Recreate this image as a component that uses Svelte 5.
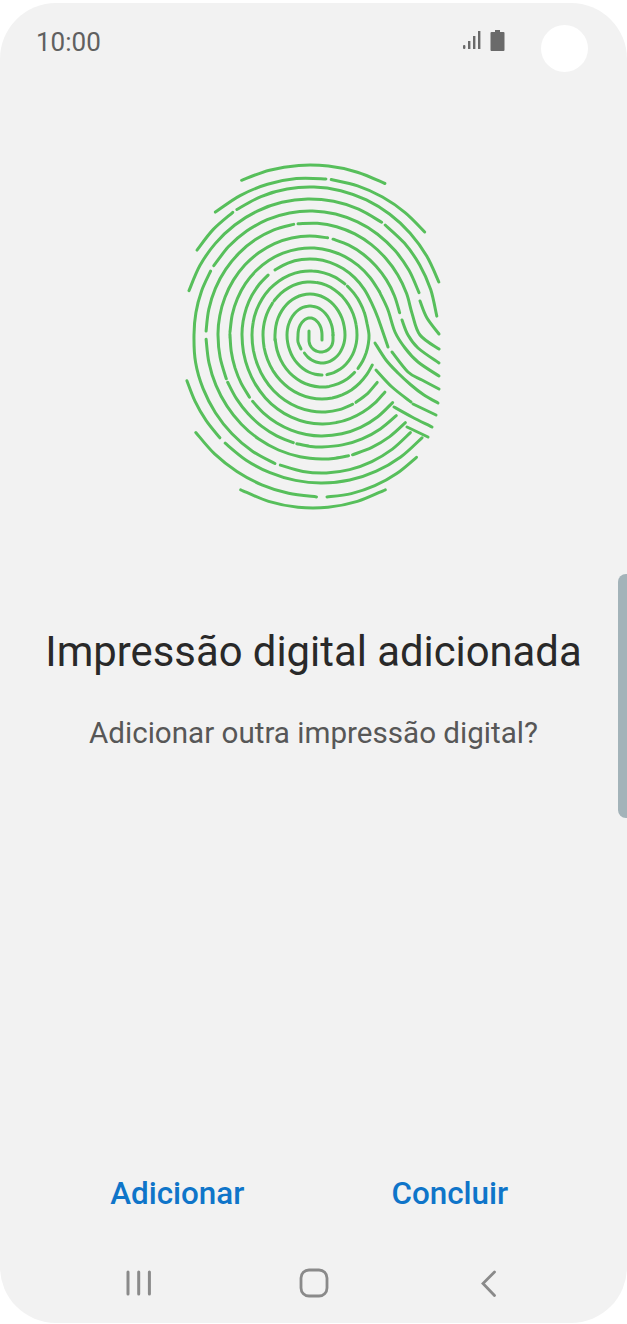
<script>
	// elliptical piece of a ridge, t in degrees (0 right, 90 top, 180 left, 270 bottom)
	function arc(cx, cy, a, b, t0, t1) {
		const n = Math.max(2, Math.ceil(Math.abs(t1 - t0) / 12));
		const pts = [];
		for (let i = 0; i <= n; i++) {
			const t = ((t0 + ((t1 - t0) * i) / n) * Math.PI) / 180;
			pts.push([cx + a * Math.cos(t), cy - b * Math.sin(t)]);
		}
		return pts;
	}
	const top = (a, b, t0, t1) => arc(310, 335, a, b, t0, t1);
	const low = (a, b, t0, t1) => arc(322, 335, a, b, t0, t1);

	function join(...parts) {
		const out = [];
		for (const p of parts.flat()) {
			const last = out[out.length - 1];
			if (!last || Math.hypot(last[0] - p[0], last[1] - p[1]) > 1) out.push(p);
		}
		return out;
	}

	const ridges = [
		top(165, 170, 114.5, 63),
		top(152, 157, 128.5, 84),
		top(152, 157, 82, 41),
		top(138, 148, 145, 124),
		top(138, 148, 122, 21),
		top(128, 136, 161, 56),
		top(128, 136, 54, 8),
		top(116, 124, 146, 20),
		[[420, 301], [427, 318], [439, 334]],
		join(top(116, 124, 149, 180), low(129, 138, 180, 248.6)),
		join(low(125, 138, 250.5, 315)),
		top(104, 112, 178, 99),
		join(top(104, 112, 96.6, 11), [[420, 335], [439, 349]]),
		join(low(116, 124, 182, 270), low(118, 124, 270, 283)),
		low(118, 124, 285, 315),
		join(low(104, 112, 203, 180), top(92, 99, 180, 79)),
		top(92, 99, 75.5, 13),
		[[402, 320], [408, 335], [418, 348], [439, 363]],
		low(104, 112, 205, 254),
		join(low(104, 112, 256, 270), low(107, 112, 270, 314)),
		top(80, 87, 178, 30),
		join(top(80, 87, 30, 28), [[388, 310], [395, 332], [405, 348], [418, 362], [439, 376]]),
		join(top(80, 87, 182, 180), low(92, 101, 180, 218)),
		join(low(92, 101, 221, 270), low(95, 101, 270, 318)),
		join(top(68, 76, 128, 180), low(80, 89, 180, 270), low(82, 89, 270, 320)),
		join(top(68, 76, 121, 25), [[378, 318], [388, 347]]),
		[[392, 352], [408, 372], [422, 380], [439, 389]],
		join(top(58, 64, 53, 180), low(70, 77, 180, 296)),
		low(70, 77, 299, 322),
		join(low(35, 40, 278, 360), top(47, 53, 0, 140)),
		join(top(47, 53, 143, 180), low(59, 64, 180, 270), low(57, 64, 270, 332)),
		join(low(23, 28, 220, 360), top(35, 41, 0, 180), [[275, 340]]),
		low(47, 52, 185, 314),
		join(low(47, 52, 320, 360), top(58, 64, 0, 50)),
		join([[333, 332]], top(23, 29, 0, 180), low(35, 40, 180, 270)),
		join([[309, 331]], arc(321, 340, 12, 12, 180, 360), [[333, 335]]),
		join([[322, 340]], top(12, 17, 0, 180), [[298, 342], [301, 349]]),
		low(142, 148, 198, 224),
		join(low(142, 148, 227, 270), low(139, 148, 270, 316)),
		low(158, 162, 217, 268),
		low(144, 162, 272, 311),
		arc(313, 335, 162, 173, 243.5, 296.5),
		[[375, 343], [386, 360], [398, 373], [411, 385], [424, 395], [438, 403]],
		[[376, 370], [392, 387], [411, 402]],
		[[413, 404], [436, 415]],
		[[394, 407], [412, 417], [432, 427]],
		[[407, 427], [428, 437]]
	];

	// catmull-rom through the points, written as cubic beziers
	function smooth(pts) {
		const f = (n) => n.toFixed(1);
		let d = `M${f(pts[0][0])} ${f(pts[0][1])}`;
		for (let i = 0; i < pts.length - 1; i++) {
			const p0 = pts[i - 1] ?? pts[i];
			const p1 = pts[i];
			const p2 = pts[i + 1];
			const p3 = pts[i + 2] ?? p2;
			d += `C${f(p1[0] + (p2[0] - p0[0]) / 6)} ${f(p1[1] + (p2[1] - p0[1]) / 6)} ${f(p2[0] - (p3[0] - p1[0]) / 6)} ${f(p2[1] - (p3[1] - p1[1]) / 6)} ${f(p2[0])} ${f(p2[1])}`;
		}
		return d;
	}
</script>

<div class="screen">
	<header class="status">
		<span class="time">10:00</span>
		<div class="status-icons">
			<svg width="20" height="21" viewBox="0 0 20 21" fill="#6a6a6a">
				<rect x="0" y="15" width="2.4" height="4" rx="1" />
				<rect x="5" y="11" width="2.4" height="8" />
				<rect x="10" y="6" width="2.4" height="13" />
				<rect x="15" y="1" width="2.4" height="18" />
			</svg>
			<svg width="16" height="22" viewBox="0 0 16 22" fill="#6a6a6a">
				<path d="M5 0h5v2h3.5a1 1 0 0 1 1 1v17a1 1 0 0 1-1 1h-12a1 1 0 0 1-1-1V3a1 1 0 0 1 1-1H5z" />
			</svg>
		</div>
		<span class="camera"></span>
	</header>

	<svg class="print" width="270" height="365" viewBox="180 155 270 365" fill="none" stroke="#57bf5b" stroke-width="3" stroke-linecap="round">
		{#each ridges as pts}
			<path d={smooth(pts)} />
		{/each}
	</svg>

	<h1>Impressão digital adicionada</h1>
	<p>Adicionar outra impressão digital?</p>

	<div class="actions">
		<span>Adicionar</span>
		<span>Concluir</span>
	</div>

	<nav>
		<svg width="26" height="26" viewBox="0 0 26 26" fill="none" stroke="#8a8a8a" stroke-width="3" stroke-linecap="round">
			<path d="M2 2v22M12.7 2v22M23.4 2v22" />
		</svg>
		<svg width="30" height="30" viewBox="0 0 30 30" fill="none" stroke="#8a8a8a" stroke-width="2.8">
			<rect x="2" y="2" width="26" height="26" rx="8" />
		</svg>
		<svg width="18" height="27" viewBox="0 0 18 27" fill="none" stroke="#8a8a8a" stroke-width="2.8" stroke-linecap="round" stroke-linejoin="miter">
			<path d="M14.5 2 3 13.5 14.5 25.5" />
		</svg>
	</nav>

	<div class="side-key"></div>
</div>

<style>
	:global(body) {
		background: #fff;
	}

	.screen {
		position: relative;
		display: flex;
		flex-direction: column;
		height: 1320px;
		margin-top: 3px;
		background: #f2f2f2;
		border-radius: 56px;
		overflow: hidden;
		font-family: Roboto, sans-serif;
	}

	.status {
		display: flex;
		align-items: center;
		height: 72px;
		padding: 0 39px 0 37px;
	}

	.time {
		font-size: 26px;
		color: #606060;
		margin-top: 5px;
		margin-left: -1px;
	}

	.status-icons {
		display: flex;
		align-items: flex-start;
		gap: 7px;
		margin-left: auto;
		margin-top: 3px;
	}

	.camera {
		width: 47px;
		height: 47px;
		margin-left: 35px;
		margin-top: 18px;
		border-radius: 50%;
		background: #fff;
	}

	.print {
		display: block;
		margin: 80px 0 0 180px;
		flex: none;
	}

	h1 {
		margin: 108px 0 0;
		font-size: 41.8px;
		line-height: 48px;
		font-weight: 400;
		text-align: center;
		color: #292929;
	}

	p {
		margin: 39px 0 0;
		font-size: 29.6px;
		line-height: 36px;
		text-align: center;
		color: #575757;
	}

	.actions {
		display: grid;
		grid-template-columns: 1fr 1fr;
		margin-top: auto;
		padding: 0 41px;
		height: 50px;
		align-items: center;
		text-align: center;
		font-size: 31.4px;
		font-weight: 500;
		color: #0f75c9;
	}

	nav {
		display: grid;
		grid-template-columns: repeat(3, 175px);
		justify-items: center;
		align-items: center;
		height: 80px;
		margin-top: 25px;
		padding: 0 51px;
	}

	.side-key {
		position: absolute;
		right: 0;
		top: 571px;
		width: 9px;
		height: 244px;
		background: #a3b3b9;
		border-radius: 8px 0 0 8px;
	}
</style>
